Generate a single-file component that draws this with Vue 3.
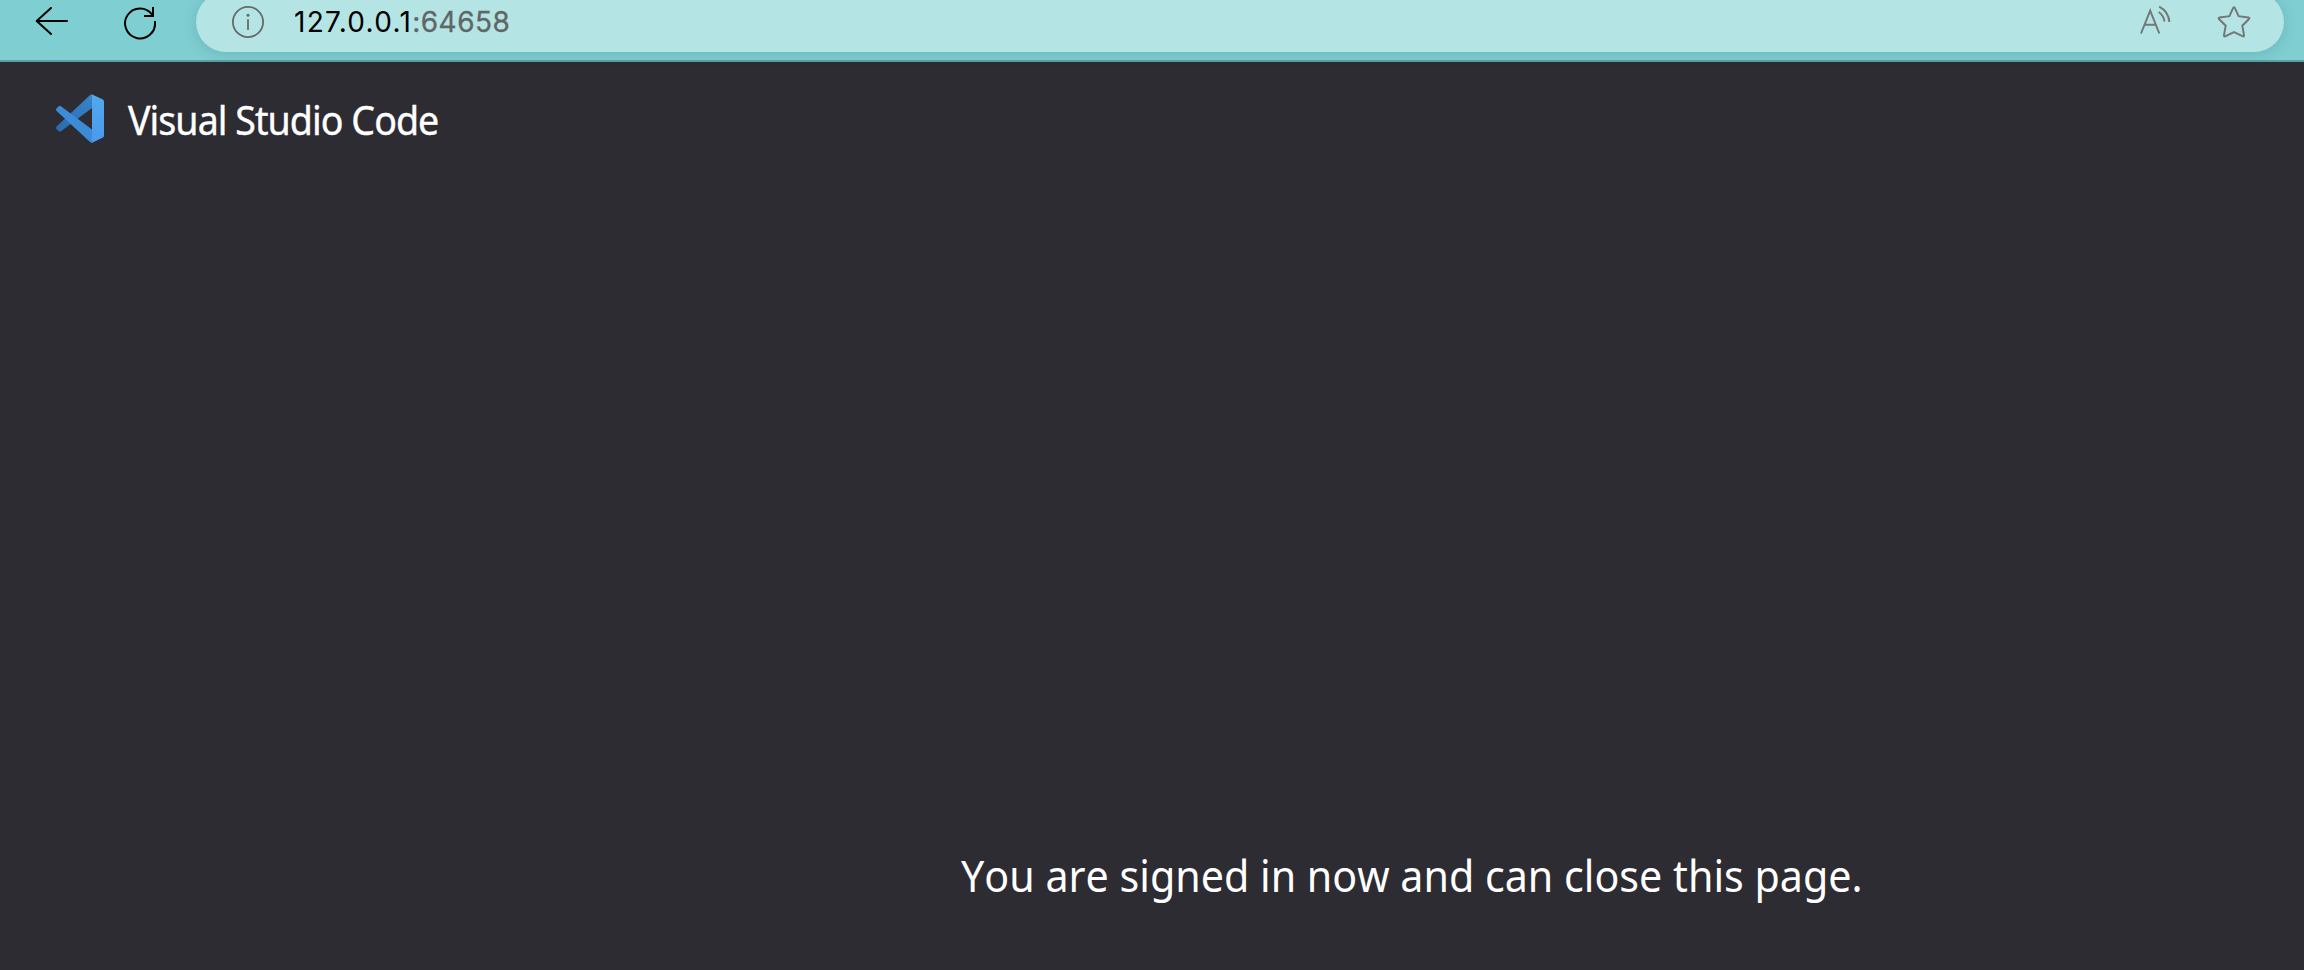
<script setup>
const address = { host: '127.0.0.1', port: ':64658' }
</script>

<template>
  <div class="window">
    <header class="toolbar">
      <svg class="back" width="36" height="32" viewBox="0 0 36 32">
        <path d="M33 16H3M17 3L2.7 16L17 29" />
      </svg>
      <svg class="reload" width="36" height="36" viewBox="0 0 36 36">
        <path d="M33 15V16A15 15 0 1 1 30.2 8.6" />
        <path d="M31 1V10H22" />
      </svg>
      <div class="address">
        <svg class="info" width="32" height="32" viewBox="0 0 32 32">
          <circle cx="16" cy="16" r="15.1" />
          <path d="M16 13.2V24" />
          <circle class="dot" cx="16" cy="9.3" r="1.5" />
        </svg>
        <span class="url">{{ address.host }}<span class="port">{{ address.port }}</span></span>
        <svg class="read" width="34" height="32" viewBox="0 0 34 32">
          <path d="M3 28.5L12.2 5.7L21.3 28.5M6.4 19.8H18" />
          <path d="M20.7 7A14 14 0 0 1 26.5 16.5M21.2 1.6A19 19 0 0 1 31.4 17" />
        </svg>
        <svg class="star" width="34" height="34" viewBox="0 0 34 34">
          <path d="M16.1 3.2Q17 1.4 17.9 3.2L21.6 11.2L31.3 12.4Q33.2 12.8 31.8 14.2L25.3 20.7L27 30.1Q27.2 32 25.4 31.2L17 27L8.6 31.2Q6.8 32 7 30.1L8.7 20.7L2.2 14.2Q.8 12.8 2.7 12.4L12.4 11.2Z" />
        </svg>
      </div>
    </header>
    <main class="page">
      <div class="brand">
        <svg class="logo" width="48" height="49" viewBox="0 0 48 49">
          <defs>
            <linearGradient id="right-face" x1="0" y1="0" x2="0" y2="1">
              <stop offset="0" stop-color="#50aaec" />
              <stop offset="1" stop-color="#4a99ee" />
            </linearGradient>
            <linearGradient id="upper-arm" x1="1" y1="0" x2="0" y2="1">
              <stop offset="0" stop-color="#3984c9" />
              <stop offset="1" stop-color="#2b6aac" />
            </linearGradient>
          </defs>
          <path fill="url(#upper-arm)" d="M36 14L5 37.2Q3.7 38 2.5 37L.6 35.2Q-.6 33.8 .6 32.4L33.5 1.5Q35 .1 37 1Z" />
          <path fill="#3c8bd8" d="M36 35.4L5 12.2Q3.7 11.4 2.5 12.4L.6 14.2Q-.6 15.6 .6 17L33.5 47.5Q35 49 37 48.2Z" />
          <path fill="url(#right-face)" d="M36 1.8Q35.6 .5 34.4.8Q35.9.2 37.2.9L46.5 5.3Q48 6.1 48 7.8V41.4Q48 43 46.5 43.8L37.2 48.2Q35.8 48.8 34.4 48.3Q36 48.6 36 46.8Z" />
        </svg>
        <span class="name">Visual Studio Code</span>
      </div>
      <p class="message">You are signed in now and can close this page.</p>
    </main>
  </div>
</template>

<style>
body {
  margin: 0;
}
</style>

<style scoped>
.window {
  width: 2304px;
  height: 970px;
  overflow: hidden;
  display: flex;
  flex-direction: column;
  background: #2d2c32;
}

svg {
  display: block;
  flex: none;
  fill: none;
  overflow: visible;
}

.toolbar {
  box-sizing: border-box;
  flex: none;
  height: 62px;
  display: flex;
  align-items: flex-start;
  background: #7fced1;
  border-bottom: 2px solid #5b9fa2;
}

.back {
  margin: 5px 0 0 34px;
  stroke: #000;
  stroke-width: 2;
  stroke-linecap: round;
  stroke-linejoin: round;
}

.reload {
  margin: 5.5px 0 0 52px;
  stroke: #000;
  stroke-width: 2;
}

.address {
  box-sizing: border-box;
  width: 2088px;
  height: 60px;
  margin: -8px 0 0 38px;
  display: flex;
  align-items: flex-start;
  border-radius: 30px;
  background: #b4e5e4;
  box-shadow: 0 2px 14px rgba(0, 70, 75, 0.16);
}

.info {
  margin: 14px 0 0 36px;
  stroke: #666a6a;
  stroke-width: 1.8;
}

.dot {
  fill: #666a6a;
  stroke: none;
}

.url {
  margin: 13px 0 0 30px;
  font: 28px/34px Inter, sans-serif;
  letter-spacing: 1.3px;
  color: #000;
  white-space: nowrap;
}

.port {
  letter-spacing: 0.5px;
  color: #606666;
  -webkit-text-stroke: 0.3px currentColor;
}

.read {
  margin: 13px 0 0 auto;
  stroke: #727878;
  stroke-width: 2;
}

.star {
  margin: 13px 33px 0 45px;
  stroke: #727878;
  stroke-width: 2;
}

.page {
  flex: 1;
  display: flex;
  flex-direction: column;
  justify-content: space-between;
  font-family: "Noto Sans", sans-serif;
  color: #fff;
}

.brand {
  display: flex;
  align-items: center;
  margin: 28px 0 0 56px;
}

.name {
  margin: 2px 0 -2px 24px;
  font-size: 39.5px;
  line-height: 56px;
  letter-spacing: -1px;
  white-space: nowrap;
  -webkit-text-stroke: 0.4px currentColor;
  transform: scaleX(0.951);
  transform-origin: left;
}

.message {
  margin: 0 0 63px 961px;
  font-size: 44.5px;
  line-height: 64px;
  font-kerning: none;
  white-space: nowrap;
  transform: scaleX(0.926);
  transform-origin: left;
}
</style>
